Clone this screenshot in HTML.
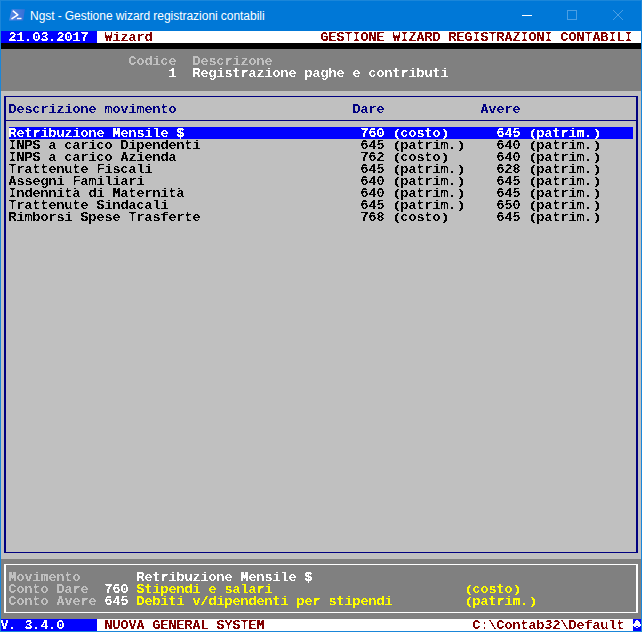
<!DOCTYPE html>
<html lang="it"><head><meta charset="utf-8"><title>Ngst - Gestione wizard registrazioni contabili</title>
<style>
html,body{margin:0;padding:0;background:#1a86d9;}
#win{position:relative;width:642px;height:632px;overflow:hidden;background:#1a86d9;}
#tb{position:absolute;left:0;top:0;width:642px;height:31px;background:#0078d7;box-shadow:inset 1px 1px 0 #1a86d9,inset -1px 0 0 #1a86d9;}
#ttl{position:absolute;left:30px;top:8px;height:16px;line-height:16px;font-family:"Liberation Sans",sans-serif;font-size:12px;color:#fff;white-space:pre;letter-spacing:-0.02px;word-spacing:-0.25px;}
#txt{position:absolute;left:-0.5px;top:0;width:642px;height:632px;filter:url(#thr);}
.b{position:absolute;}
.t{position:absolute;height:12px;line-height:12px;font-family:"Liberation Mono",monospace;font-weight:bold;font-size:13.333px;white-space:pre;letter-spacing:0;}
.p{display:inline-block;width:8px;text-align:center;font-size:10.5px;line-height:0;transform:scaleX(1.6);}
.d{display:inline-block;width:8px;text-align:center;line-height:0;transform:translateX(-1px) scaleX(1.5);}
.w{color:#fff}.k{color:#000}.r{color:#800000}.lg{color:#c0c0c0}.db{color:#000080}.y{color:#ffff00}
</style></head><body>
<div id="win">
<div id="tb">
<svg class="b" style="left:0;top:0" width="40" height="31" viewBox="0 0 40 31"><defs><linearGradient id="ig" x1="0" y1="0" x2="1" y2="0"><stop offset="0" stop-color="#5a8ae6"/><stop offset="1" stop-color="#356fd6"/></linearGradient></defs><polygon points="11.7,9.3 24.9,9.3 23.2,20.6 9.1,20.6" fill="url(#ig)"/><polyline points="13.3,11.2 17.8,14.8 12,18.6" fill="none" stroke="#fff" stroke-width="1.6" stroke-linecap="round" stroke-linejoin="round"/><rect x="16.9" y="17.8" width="4.6" height="1.4" fill="#fff"/></svg>
<div id="ttl">Ngst - Gestione wizard registrazioni contabili</div>
<div class="b" style="left:522px;top:15px;width:10px;height:1px;background:#fff"></div>
<div class="b" style="left:567px;top:10px;width:8px;height:8px;border:1px solid #4c9fe3"></div>
<svg class="b" style="left:612px;top:9px" width="12" height="12" viewBox="0 0 12 12"><path d="M1 1 L11 11 M11 1 L1 11" stroke="#4c9fe3" stroke-width="1" fill="none"/></svg>
</div>
<div class="b" style="left:1px;top:31px;width:640px;height:600px;background:#808080"></div>
<div class="b" style="left:1px;top:31px;width:96px;height:12px;background:#0000ff"></div>
<div class="b" style="left:97px;top:31px;width:544px;height:12px;background:#ffffff"></div>
<div class="b" style="left:1px;top:43px;width:640px;height:6px;background:#000000"></div>
<div class="b" style="left:1px;top:91px;width:640px;height:468px;background:#c0c0c0"></div>
<div class="b" style="left:9px;top:127px;width:624px;height:12px;background:#0000ff"></div>
<div class="b" style="left:4px;top:96px;width:634px;height:1px;background:#000080"></div>
<div class="b" style="left:4px;top:120px;width:634px;height:1px;background:#000080"></div>
<div class="b" style="left:4px;top:552px;width:634px;height:1px;background:#000080"></div>
<div class="b" style="left:4px;top:96px;width:2px;height:457px;background:#000080"></div>
<div class="b" style="left:636px;top:96px;width:2px;height:457px;background:#000080"></div>
<div class="b" style="left:4px;top:564px;width:634px;height:1px;background:#ffffff"></div>
<div class="b" style="left:4px;top:612px;width:634px;height:1px;background:#ffffff"></div>
<div class="b" style="left:4px;top:564px;width:2px;height:49px;background:#ffffff"></div>
<div class="b" style="left:636px;top:564px;width:2px;height:49px;background:#ffffff"></div>
<div class="b" style="left:1px;top:619px;width:96px;height:12px;background:#0000ff"></div>
<div class="b" style="left:97px;top:619px;width:536px;height:12px;background:#ffffff"></div>
<div class="b" style="left:633px;top:619px;width:8px;height:12px;background:#0000ff"></div>
<svg width="0" height="0" style="position:absolute"><filter id="thr" x="0" y="0" width="100%" height="100%" color-interpolation-filters="sRGB"><feComponentTransfer><feFuncA type="discrete" tableValues="0 1"/></feComponentTransfer></filter></svg>
<div id="txt">
<div class="t w" style="left:9px;top:32px">21<span class="d">.</span>03<span class="d">.</span>2017</div>
<div class="t r" style="left:105px;top:32px">Wizard</div>
<div class="t r" style="left:321px;top:32px">GESTIONE WIZARD REGISTRAZIONI CONTABILI</div>
<div class="t lg" style="left:129px;top:56px">Codice</div>
<div class="t lg" style="left:193px;top:56px">Descrizone</div>
<div class="t w" style="left:169px;top:68px">1</div>
<div class="t w" style="left:193px;top:68px">Registrazione paghe e contributi</div>
<div class="t db" style="left:9px;top:104px">Descrizione movimento</div>
<div class="t db" style="left:353px;top:104px">Dare</div>
<div class="t db" style="left:481px;top:104px">Avere</div>
<div class="t w" style="left:9px;top:128px">Retribuzione Mensile $</div>
<div class="t w" style="left:361px;top:128px">760</div>
<div class="t w" style="left:393px;top:128px"><span class="p">(</span>costo<span class="p">)</span></div>
<div class="t w" style="left:497px;top:128px">645</div>
<div class="t w" style="left:529px;top:128px"><span class="p">(</span>patrim<span class="d">.</span><span class="p">)</span></div>
<div class="t k" style="left:9px;top:140px">INPS a carico Dipendenti</div>
<div class="t k" style="left:361px;top:140px">645</div>
<div class="t k" style="left:393px;top:140px"><span class="p">(</span>patrim<span class="d">.</span><span class="p">)</span></div>
<div class="t k" style="left:497px;top:140px">640</div>
<div class="t k" style="left:529px;top:140px"><span class="p">(</span>patrim<span class="d">.</span><span class="p">)</span></div>
<div class="t k" style="left:9px;top:152px">INPS a carico Azienda</div>
<div class="t k" style="left:361px;top:152px">762</div>
<div class="t k" style="left:393px;top:152px"><span class="p">(</span>costo<span class="p">)</span></div>
<div class="t k" style="left:497px;top:152px">640</div>
<div class="t k" style="left:529px;top:152px"><span class="p">(</span>patrim<span class="d">.</span><span class="p">)</span></div>
<div class="t k" style="left:9px;top:164px">Trattenute Fiscali</div>
<div class="t k" style="left:361px;top:164px">645</div>
<div class="t k" style="left:393px;top:164px"><span class="p">(</span>patrim<span class="d">.</span><span class="p">)</span></div>
<div class="t k" style="left:497px;top:164px">628</div>
<div class="t k" style="left:529px;top:164px"><span class="p">(</span>patrim<span class="d">.</span><span class="p">)</span></div>
<div class="t k" style="left:9px;top:176px">Assegni Familiari</div>
<div class="t k" style="left:361px;top:176px">640</div>
<div class="t k" style="left:393px;top:176px"><span class="p">(</span>patrim<span class="d">.</span><span class="p">)</span></div>
<div class="t k" style="left:497px;top:176px">645</div>
<div class="t k" style="left:529px;top:176px"><span class="p">(</span>patrim<span class="d">.</span><span class="p">)</span></div>
<div class="t k" style="left:9px;top:188px">Indennità di Maternità</div>
<div class="t k" style="left:361px;top:188px">640</div>
<div class="t k" style="left:393px;top:188px"><span class="p">(</span>patrim<span class="d">.</span><span class="p">)</span></div>
<div class="t k" style="left:497px;top:188px">645</div>
<div class="t k" style="left:529px;top:188px"><span class="p">(</span>patrim<span class="d">.</span><span class="p">)</span></div>
<div class="t k" style="left:9px;top:200px">Trattenute Sindacali</div>
<div class="t k" style="left:361px;top:200px">645</div>
<div class="t k" style="left:393px;top:200px"><span class="p">(</span>patrim<span class="d">.</span><span class="p">)</span></div>
<div class="t k" style="left:497px;top:200px">650</div>
<div class="t k" style="left:529px;top:200px"><span class="p">(</span>patrim<span class="d">.</span><span class="p">)</span></div>
<div class="t k" style="left:9px;top:212px">Rimborsi Spese Trasferte</div>
<div class="t k" style="left:361px;top:212px">768</div>
<div class="t k" style="left:393px;top:212px"><span class="p">(</span>costo<span class="p">)</span></div>
<div class="t k" style="left:497px;top:212px">645</div>
<div class="t k" style="left:529px;top:212px"><span class="p">(</span>patrim<span class="d">.</span><span class="p">)</span></div>
<div class="t lg" style="left:9px;top:572px">Movimento</div>
<div class="t w" style="left:137px;top:572px">Retribuzione Mensile $</div>
<div class="t lg" style="left:9px;top:584px">Conto Dare</div>
<div class="t w" style="left:105px;top:584px">760</div>
<div class="t y" style="left:137px;top:584px">Stipendi e salari</div>
<div class="t y" style="left:465px;top:584px"><span class="p">(</span>costo<span class="p">)</span></div>
<div class="t lg" style="left:9px;top:596px">Conto Avere</div>
<div class="t w" style="left:105px;top:596px">645</div>
<div class="t y" style="left:137px;top:596px">Debiti v/dipendenti per stipendi</div>
<div class="t y" style="left:465px;top:596px"><span class="p">(</span>patrim<span class="d">.</span><span class="p">)</span></div>
<div class="t w" style="left:1px;top:620px">V<span class="d">.</span> 3<span class="d">.</span>4<span class="d">.</span>0</div>
<div class="t r" style="left:105px;top:620px">NUOVA GENERAL SYSTEM</div>
<div class="t r" style="left:473px;top:620px">C:\Contab32\Default</div>
<div class="t w" style="left:631.5px;top:617.5px;width:12px;height:12px;line-height:12px;text-align:center;font-family:'DejaVu Sans Mono','DejaVu Sans',monospace;font-weight:normal;font-size:15px">♠</div>
</div>
</div></body></html>
